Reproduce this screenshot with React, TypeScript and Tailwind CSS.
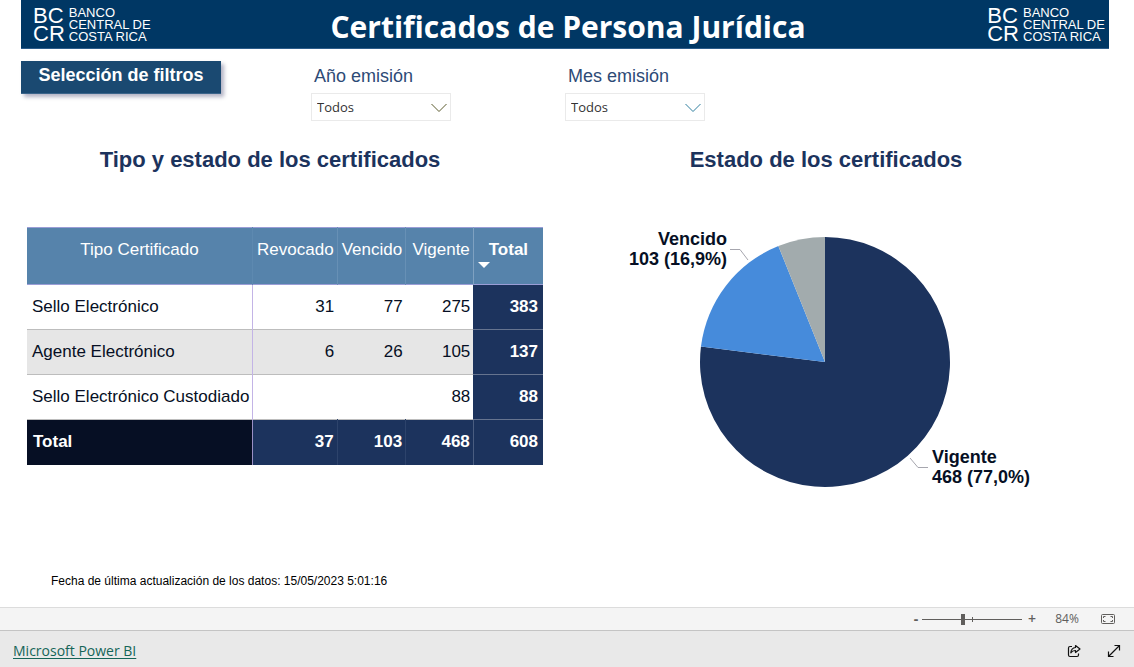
const rows = [
  { name: "Sello Electrónico", revocado: "31", vencido: "77", vigente: "275", total: "383" },
  { name: "Agente Electrónico", revocado: "6", vencido: "26", vigente: "105", total: "137" },
  { name: "Sello Electrónico Custodiado", revocado: "", vencido: "", vigente: "88", total: "88" },
];

const slices = [
  { label: "Vigente", value: 468, color: "#1c335d" },
  { label: "Vencido", value: 103, color: "#468bdb" },
  { label: "Revocado", value: 37, color: "#a2abad" },
];

const CX = 209;
const CY = 135;
const R = 125;

const slicePath = (from: number, to: number) => {
  const point = (t: number) => {
    const a = t * 2 * Math.PI;
    return `${CX + R * Math.sin(a)} ${CY - R * Math.cos(a)}`;
  };
  const large = to - from > 0.5 ? 1 : 0;
  return `M${CX} ${CY} L${point(from)} A${R} ${R} 0 ${large} 1 ${point(to)} Z`;
};

const Logo = () => (
  <div className="flex gap-1 text-white">
    <div className="text-[22px] leading-[18px]">
      <div>BC</div>
      <div>CR</div>
    </div>
    <div className="w-20 whitespace-nowrap text-[13px] leading-3">
      <div>BANCO</div>
      <div>CENTRAL DE</div>
      <div>COSTA RICA</div>
    </div>
  </div>
);

const Filter = ({ id, label, stroke }: { id: string; label: string; stroke: string }) => (
  <div className="w-[140px]">
    <label htmlFor={id} className="block pb-0.5 pl-[3px] text-lg leading-[30px] text-[#2d4a76]">
      {label}
    </label>
    <div className="relative">
      <select
        id={id}
        className="block h-7 w-full appearance-none border border-[#eaeaea] bg-white px-[5px] pt-0.5 font-['Open_Sans',sans-serif] text-[13px] text-[#333]"
      >
        <option>Todos</option>
      </select>
      <svg
        className="pointer-events-none absolute right-1 top-2.5 h-2.5 w-4"
        viewBox="0 0 16 10"
        fill="none"
        stroke={stroke}
      >
        <path d="M.5 1 L8 8.500 L15.500 1" />
      </svg>
    </div>
  </div>
);

const CertificatesTable = () => (
  <table className="w-full table-fixed border-collapse text-[17px] leading-5 text-[#060f24]">
    <colgroup>
      <col className="w-[43.7%]" />
      <col className="w-[16.4%]" />
      <col className="w-[13.3%]" />
      <col className="w-[13.1%]" />
      <col className="w-[13.5%]" />
    </colgroup>
    <thead>
      <tr className="h-[57px] border-y border-[#9a9dd6] bg-[#5683ab] align-top text-white">
        <th className="pt-3 font-normal">Tipo Certificado</th>
        <th className="border-l border-[#5d89b0] pt-3 pr-[3px] text-right font-normal">Revocado</th>
        <th className="border-l border-[#6790b5] pt-3 pr-[3px] text-right font-normal">Vencido</th>
        <th className="border-l border-[#6790b5] pt-3 pr-[3px] text-right font-normal">Vigente</th>
        <th className="relative border-l border-[#7fa1c1] pt-3 font-bold">
          Total
          <svg className="absolute left-1 top-[34px] h-1.5 w-3" viewBox="0 0 12 6">
            <path d="M0 0H12L6 6Z" fill="#fff" />
          </svg>
        </th>
      </tr>
    </thead>
    <tbody>
      {rows.map((row) => (
        <tr key={row.name} className="h-[45px] border-b border-[#bdbdbd] even:bg-[#e6e6e6]">
          <td className="whitespace-nowrap border-r border-r-[#c3b4e6] pl-[5px]">{row.name}</td>
          <td className="pr-[3px] text-right">{row.revocado}</td>
          <td className="pr-[3px] text-right">{row.vencido}</td>
          <td className="pr-[3px] text-right">{row.vigente}</td>
          <td className="border-b border-b-[#66748f] bg-[#1c335d] pr-[5px] text-right font-bold text-white">
            {row.total}
          </td>
        </tr>
      ))}
    </tbody>
    <tfoot>
      <tr className="h-[45px] bg-[#1c335d] text-right font-bold text-white">
        <td className="border-r border-[#9a8fc4] bg-[#060f24] pl-[6px] text-left">Total</td>
        <td className="pr-[3px]">37</td>
        <td className="border-l border-[#2d436b] pr-[3px]">103</td>
        <td className="border-l border-[#2d436b] pr-[3px]">468</td>
        <td className="border-l border-[#4a5d80] pr-[5px]">608</td>
      </tr>
    </tfoot>
  </table>
);

const StatusPie = () => {
  const total = slices.reduce((sum, s) => sum + s.value, 0);
  let acc = 0;

  return (
    <svg
      className="mx-auto w-[420px] max-w-full"
      viewBox="0 0 420 270"
      role="img"
      aria-label="Estado de los certificados"
    >
      {slices.map((s) => {
        const from = acc / total;
        acc += s.value;
        return <path key={s.label} d={slicePath(from, acc / total)} fill={s.color} />;
      })}
      <g fill="none" stroke="#a6a6ae">
        <path d="M114 22.500H124L132 33" />
        <path d="M294 231L302 240.500H312" />
      </g>
      <g className="text-lg font-bold" fill="#060f24">
        <text x="111" y="18" textAnchor="end">Vencido</text>
        <text x="111" y="38" textAnchor="end">103 (16,9%)</text>
        <text x="316" y="236">Vigente</text>
        <text x="316" y="256">468 (77,0%)</text>
      </g>
    </svg>
  );
};

const ZoomBar = () => (
  <div className="flex h-[23px] items-center justify-end border-t border-[#dcdcdc] bg-[#f4f4f4] pr-[18px] font-['Open_Sans',sans-serif] text-[#605e5c]">
    <button aria-label="Alejar" className="w-3 text-sm font-bold leading-5">-</button>
    <div className="relative flex items-center">
      <input
        type="range"
        min={10}
        max={190}
        defaultValue={84}
        aria-label="Zoom"
        className="h-3 w-[100px] appearance-none bg-transparent [&::-webkit-slider-runnable-track]:h-px [&::-webkit-slider-runnable-track]:bg-[#605e5c] [&::-webkit-slider-thumb]:-mt-[5px] [&::-webkit-slider-thumb]:h-[11px] [&::-webkit-slider-thumb]:w-1 [&::-webkit-slider-thumb]:appearance-none [&::-webkit-slider-thumb]:bg-[#605e5c]"
      />
      <span className="pointer-events-none absolute left-1/2 h-[5px] w-px bg-[#605e5c]" />
    </div>
    <button aria-label="Acercar" className="w-5 text-sm font-semibold leading-5">+</button>
    <span className="w-[50px] text-center text-xs">84%</span>
    <button aria-label="Ajustar a la página" className="ml-2">
      <svg className="h-3 w-4" viewBox="0 0 16 12" fill="none" stroke="#605e5c">
        <rect x="1.500" y="1.500" width="13" height="9" rx="1" />
        <path d="M5.500 3.500H3.500V5M3.500 7V8.500H5.500M10.500 3.500H12.500V5M12.500 7V8.500H10.500" />
      </svg>
    </button>
  </div>
);

const Footer = () => (
  <footer className="flex h-[37px] items-center border-t border-[#c4c4c4] bg-[#e9e9e9] px-[13px] pt-1">
    <a href="#" className="font-['Open_Sans',sans-serif] text-sm text-[#156558] underline underline-offset-2">
      Microsoft Power BI
    </a>
    <button aria-label="Compartir" className="ml-auto">
      <svg
        className="h-3.5 w-3.5"
        viewBox="0 0 14 14"
        fill="none"
        stroke="#111"
        strokeWidth="1.2"
        strokeLinejoin="round"
      >
        <path d="M5 2.500H3Q1.500 2.500 1.500 4V11Q1.500 12.500 3 12.500H10Q11.500 12.500 11.500 11V9.500" />
        <path d="M8.500 1.500L13 5L8.500 8.500V6.500Q5.500 6.300 3.800 8.800Q4.200 4 8.500 3.500Z" />
      </svg>
    </button>
    <button aria-label="Pantalla completa" className="ml-[26px]">
      <svg className="h-3.5 w-3.5" viewBox="0 0 14 14" fill="none" stroke="#111" strokeWidth="1.2">
        <path d="M1.500 12.500L12.500 1.500M7.500 1.500H12.500V6.500M1.500 7.500V12.500H6.500" />
      </svg>
    </button>
  </footer>
);

const App = () => {
  return (
    <div className="flex min-h-screen flex-col bg-white font-['Liberation_Sans',Arial,sans-serif]">
      <header className="ml-[21px] mr-[25px] flex h-[49px] items-start justify-between border-b border-[#2c5c8a] bg-[#003764] pl-3 pr-1.5 pt-[7px]">
        <Logo />
        <h1 className="font-['Open_Sans',sans-serif] text-[30px] font-bold leading-10 text-white">
          Certificados de Persona Jurídica
        </h1>
        <Logo />
      </header>

      <main className="flex flex-1 flex-col pl-[21px] pr-[25px]">
        <div className="flex items-start pt-3">
          <button className="h-[33px] w-[200px] border-b border-[#3a648a] bg-[#1a4971] pb-1 text-lg font-bold leading-7 text-white shadow-[3px_3px_4px_rgba(0,0,60,0.3)]">
            Selección de filtros
          </button>
          <div className="ml-[90px] flex gap-[114px]">
            <Filter id="anio" label="Año emisión" stroke="#5b5a2c" />
            <Filter id="mes" label="Mes emisión" stroke="#2f7f9e" />
          </div>
        </div>

        <div className="grid grid-cols-[516fr_566fr] pl-1.5 pt-[25px] text-[#1c335d]">
          <section>
            <h2 className="pr-[30px] text-center text-[22px] font-bold leading-7">
              Tipo y estado de los certificados
            </h2>
            <div className="pt-[53px]">
              <CertificatesTable />
            </div>
          </section>
          <section>
            <h2 className="text-center text-[22px] font-bold leading-7">Estado de los certificados</h2>
            <div className="pt-[53px]">
              <StatusPie />
            </div>
          </section>
        </div>

        <p className="mt-auto pb-[17px] pl-[30px] text-xs leading-[18px] text-black">
          Fecha de última actualización de los datos: 15/05/2023 5:01:16
        </p>
      </main>

      <ZoomBar />
      <Footer />
    </div>
  );
};

export default App;
